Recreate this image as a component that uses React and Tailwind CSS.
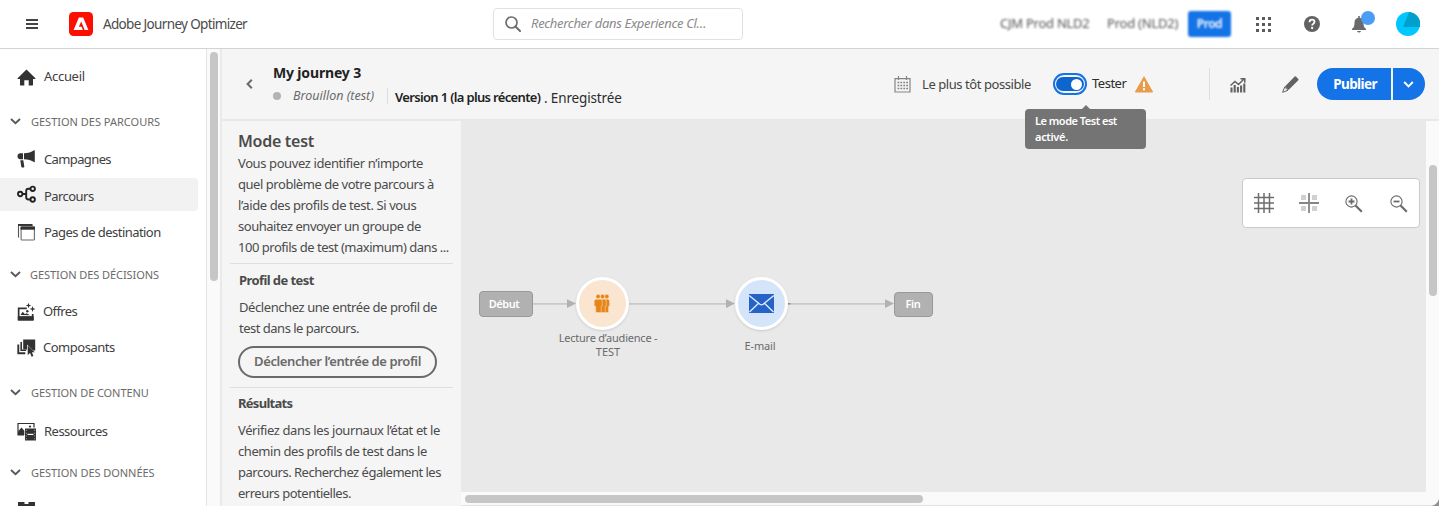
import React from "react";

function SectionTitle({ children, className = "" }) {
  return (
    <div className={`flex h-6 shrink-0 items-center pl-[10px] text-[11px] whitespace-nowrap text-[#6a6a6a] ${className}`}>
      <svg width="11" height="7" viewBox="0 0 11 7" className="mr-[10px] -mt-[2px] shrink-0">
        <path d="M1 1l4.500 4.300L10 1" fill="none" stroke="#5a5a5a" strokeWidth="1.900" />
      </svg>
      {children}
    </div>
  );
}

function NavItem({ icon, children, className = "" }) {
  return (
    <div className={`flex h-[34px] shrink-0 items-center pl-[17px] text-[13px] whitespace-nowrap text-[#404040] ${className}`}>
      <span className="mr-2 h-5 w-[19px] shrink-0">{icon}</span>
      {children}
    </div>
  );
}

const dark = "#323232";

const HomeIcon = (
  <svg width="19" height="20" viewBox="0 0 19 20">
    <path d="M9.500 2.500L.6 11.200c-.3.3-.1.8.3.8H3v6c0 .3.2.5.5.5H7.300v-5.200h4.400v5.200h3.800c.3 0 .5-.2.5-.5v-6h2.100c.4 0 .6-.5.3-.8z" fill={dark} />
  </svg>
);

const MegaphoneIcon = (
  <svg width="19" height="20" viewBox="0 0 19 20">
    <path d="M6 3.200H3.200A3 3 0 0 0 .5 6.200a3 3 0 0 0 2.700 3H6z" fill={dark} />
    <path d="M7 3.200C11 3.200 14.500 2.300 17 .3q.8-.4.8.4v11q0 .8-.8.4C14.500 10.200 11 9.200 7 9.200z" fill={dark} />
    <path d="M3.300 10.300h3l1 6.300c.1.500-.2.800-.6.800H5.100c-.5 0-.7-.3-.8-.7z" fill={dark} />
  </svg>
);

const JourneyIcon = (
  <svg width="19" height="20" viewBox="0 0 19 20" fill="none" stroke="#222" strokeWidth="1.900">
    <circle cx="3.200" cy="9" r="2.200" />
    <circle cx="15.700" cy="3.800" r="2.200" />
    <circle cx="15.700" cy="14.500" r="2.200" />
    <path d="M5.400 9H9M13.500 3.800H11.500Q9.200 3.800 9.200 6v6.300q0 2.200 2.300 2.200h2" />
  </svg>
);

const PagesIcon = (
  <svg width="19" height="20" viewBox="0 0 19 20">
    <path d="M1.500 14.500V2.400H15.500" fill="none" stroke="#555" strokeWidth="1.100" />
    <path d="M1 1h14.500v1.700H1z" fill={dark} />
    <rect x="4.100" y="4" width="13.300" height="13" rx=".8" fill="white" stroke="#6a6a6a" strokeWidth="1.100" />
    <path d="M3.600 3.500h14.300v3.200H3.600z" fill={dark} />
  </svg>
);

const OffersIcon = (
  <svg width="19" height="20" viewBox="0 0 19 20">
    <path d="M.8 5.500h9v1.700H2.500v7.300h12.300V12h1.700v5.800q0 .6-.6.6H1.400q-.6 0-.6-.6z" fill={dark} />
    <path d="M3.500 13l2.200-3.200L8 12.300l1.500-1 3.500 1.900z" fill={dark} />
    <circle cx="10.300" cy="9.200" r="1.200" fill={dark} />
    <path d="M11.500 .8l.7 2 2 .7-2 .7-.7 2-.7-2-2-.7 2-.7zM15.500 4l.8 2.300 2.300.7-2.300.8-.8 2.200-.7-2.200-2.300-.8 2.300-.7zM.800 14.300h16v4.200h-16z" fill={dark} />
  </svg>
);

const ComponentsIcon = (
  <svg width="19" height="20" viewBox="0 0 19 20">
    <path d="M1.300 6.500v8.800h7" fill="none" stroke={dark} strokeWidth="1.900" />
    <path d="M4.200 4v8.300h5" fill="none" stroke={dark} strokeWidth="1.600" />
    <path d="M6.200 1.500h12v11h-2L10 6.500v5H6.200z" fill={dark} />
    <path d="M10.700 7.500l7 6.800h-2.800l1.500 3.600-1.800.8-1.500-3.700-2.400 2z" fill={dark} />
  </svg>
);

const AssetsIcon = (
  <svg width="19" height="20" viewBox="0 0 19 20">
    <path d="M7 13H1V1.500h16v4" fill="none" stroke={dark} strokeWidth="1.200" />
    <path d="M1 13V9.500l3.500-4L7.300 8.800V13z" fill={dark} />
    <circle cx="13" cy="4.600" r="1.100" fill={dark} />
    <path d="M8 6.500h11v12H8z" fill={dark} />
    <path d="M10.500 12.400h6" stroke="white" strokeWidth="1.200" />
    <path d="M9.300 7.800v10M17.700 7.800v10" stroke="#aaa" strokeWidth=".9" strokeDasharray="1.200 1.600" />
  </svg>
);

const SchemaIcon = (
  <svg width="19" height="20" viewBox="0 0 19 20">
    <path d="M1 0h6.500v2h4V0H18v5.500h-2V12H3V5.500H1z" fill={dark} />
  </svg>
);

function Sidebar() {
  return (
    <nav className="flex h-full w-[207px] shrink-0 flex-col overflow-hidden border-r border-[#e4e4e4] bg-white pt-[11px]">
      <NavItem icon={HomeIcon}><span className="tracking-[-0.3px]">Accueil</span></NavItem>
      <SectionTitle className="mt-4">GESTION DES PARCOURS</SectionTitle>
      <NavItem icon={MegaphoneIcon} className="mt-[9px]"><span className="tracking-[-0.62px]">Campagnes</span></NavItem>
      <div className="mt-px mr-2 h-[33px] shrink-0 rounded-r bg-[#f2f2f2]">
        <NavItem icon={JourneyIcon} className="text-[#222222]"><span className="mt-[3px] tracking-[-0.55px]">Parcours</span></NavItem>
      </div>
      <NavItem icon={PagesIcon} className="mt-[5px]"><span className="tracking-[-0.55px]">Pages de destination</span></NavItem>
      <SectionTitle className="mt-[13px]"><span className="-ml-px tracking-[-0.07px]">GESTION DES DÉCISIONS</span></SectionTitle>
      <NavItem icon={OffersIcon} className="mt-2"><span className="-ml-px tracking-[-0.6px]">Offres</span></NavItem>
      <NavItem icon={ComponentsIcon} className="mt-[2px]"><span className="-ml-px tracking-[-0.48px]">Composants</span></NavItem>
      <SectionTitle className="mt-4"><span className="tracking-[-0.08px]">GESTION DE CONTENU</span></SectionTitle>
      <NavItem icon={AssetsIcon} className="mt-[10px]"><span className="tracking-[-0.52px]">Ressources</span></NavItem>
      <SectionTitle className="mt-3"><span className="tracking-[-0.05px]">GESTION DES DONNÉES</span></SectionTitle>
      <NavItem icon={SchemaIcon} className="mt-[10px]"><span className="tracking-[-0.4px]">Schémas</span></NavItem>
    </nav>
  );
}

function TopBar() {
  return (
    <header className="flex h-[49px] shrink-0 items-center border-b border-[#d3d3d3] bg-white">
      <div className="ml-[26px] flex h-[10px] w-3 flex-col justify-between">
        <div className="h-[2px] bg-[#444]" />
        <div className="h-[2px] bg-[#444]" />
        <div className="h-[2px] bg-[#444]" />
      </div>
      <svg width="24" height="24" viewBox="0 0 24 24" className="ml-[31px]">
        <rect width="24" height="24" rx="4.500" fill="#fa0f00" />
        <path d="M9.900 5.500h4.300L19.400 18h-3.700L12.200 9.400 9.900 14.700h2.700l1.300 3.300H4.600z" fill="white" />
      </svg>
      <div className="ml-[10px] w-[146px] text-[13.5px] tracking-[-0.66px] whitespace-nowrap text-[#4b4b4b]">Adobe Journey Optimizer</div>
      <div className="ml-[244px] flex h-8 w-[250px] items-center rounded border border-[#e1e1e1]">
        <svg width="16" height="16" viewBox="0 0 16 16" className="ml-[11px]">
          <circle cx="6.500" cy="6.500" r="5.500" fill="none" stroke="#6e6e6e" strokeWidth="1.700" />
          <path d="M10.500 10.500l4.500 4.500" stroke="#6e6e6e" strokeWidth="2" strokeLinecap="round" />
        </svg>
        <span className="ml-[10px] text-[13px] tracking-[-0.32px] whitespace-nowrap text-[#8a8a8a] italic">Rechercher dans Experience Cl…</span>
      </div>
      <div className="ml-[257px] flex items-center text-[13px] whitespace-nowrap text-[#555] blur-[1px]">
        <span className="w-[107px] tracking-[-0.25px]">CJM Prod NLD2</span>
        <span className="w-[81px] tracking-[-0.22px]">Prod (NLD2)</span>
        <span className="flex h-[26px] w-[43px] items-center justify-center rounded-[3px] bg-[#1473e6] text-[12px] font-semibold tracking-[-0.5px] text-white">Prod</span>
      </div>
      <svg width="15" height="15" viewBox="0 0 15 15" className="ml-[25px]" fill="#5c5c5c">
        <path d="M0 0h3v3H0zM6 0h3v3H6zM12 0h3v3h-3zM0 6h3v3H0zM6 6h3v3H6zM12 6h3v3h-3zM0 12h3v3H0zM6 12h3v3H6zM12 12h3v3h-3z" />
      </svg>
      <svg width="16" height="16" viewBox="0 0 16 16" className="ml-[33px]">
        <circle cx="8" cy="8" r="8" fill="#626262" />
        <path d="M5.500 6.200Q5.500 3.700 8 3.700t2.500 2.100Q10.500 7 9.300 7.800 8.100 8.500 8.100 9.600" fill="none" stroke="white" strokeWidth="1.800" />
        <circle cx="8.100" cy="12" r="1.150" fill="white" />
      </svg>
      <div className="relative ml-8 h-4 w-[14px]">
        <svg width="14" height="17" viewBox="0 0 14 17" fill="#6a6a6a">
          <path d="M6.200 0h1.600v1.800C10.500 2.300 11.500 4.200 11.500 6.700c0 3.600.8 5 2.500 6v1.300H0v-1.300c1.700-1 2.500-2.400 2.500-6 0-2.500 1-4.400 3.700-4.900zM5 15h4q-.5 1.600-2 1.600T5 15z" />
        </svg>
        <div className="absolute -top-[5px] left-[9px] h-[14px] w-[14px] rounded-full bg-[#4b9cf5]" />
      </div>
      <svg width="24" height="24" viewBox="0 0 24 24" className="ml-[30px]">
        <circle cx="12" cy="12" r="12" fill="#00c8ff" />
        <path d="M13 .1A12 12 0 0 1 24 15H7z" fill="#00a0cc" />
      </svg>
    </header>
  );
}

function JourneyHeader() {
  return (
    <div className="flex h-[72px] shrink-0 border-b-2 border-[#e8e8e8] bg-[#f5f5f5] whitespace-nowrap">
      <svg width="7" height="10" viewBox="0 0 7 10" className="mt-[30px] ml-6 shrink-0">
        <path d="M5.800 .8L1.600 5l4.200 4.200" fill="none" stroke="#6a6a6a" strokeWidth="2" />
      </svg>
      <div className="ml-[20px] w-[350px] pt-[14px]">
        <div className="h-5 text-[14px] leading-5 font-bold tracking-[-0.16px] text-[#222]">My journey 3</div>
        <div className="mt-[3px] flex h-5 items-center">
          <span className="h-2 w-2 rounded-full bg-[#b3b3b3]" />
          <span className="mt-px ml-3 w-[94px] text-[12.5px] text-[#6a6a6a] italic">Brouillon (test)</span>
          <span className="h-4 w-px bg-[#dedede]" />
          <span className="mt-[3px] ml-[7px] w-[149px] text-[13px] font-semibold tracking-[-0.66px] text-[#222]">Version 1 (la plus récente)</span>
          <span className="mt-[5px] text-[13.5px] tracking-[-0.15px] text-[#2c2c2c]">. Enregistrée</span>
        </div>
      </div>
      <div className="ml-auto flex h-[70px] items-center pr-[14px]">
        <svg width="17" height="17" viewBox="0 0 17 17">
          <path d="M1 2.700h15v13.300H1zM4.500 0v4M12.500 0v4" fill="none" stroke="#858585" strokeWidth="1.200" />
          <path d="M3.500 6.500h10.500M3.500 9.500h10.500M3.500 12.500h10.500" stroke="#858585" strokeWidth="1.700" strokeDasharray="1.800 1.100" />
        </svg>
        <span className="mt-px ml-[11px] w-[131px] text-[13px] tracking-[-0.43px] text-[#444]">Le plus tôt possible</span>
        <div className="relative flex h-[22px] w-[34px] items-center justify-center rounded-full border-2 border-[#1473e6]">
          <div className="flex h-[14px] w-7 items-center justify-end rounded-full bg-[#0d66d0] pr-[2px]">
            <div className="h-[11px] w-[11px] rounded-full bg-white" />
          </div>
          <div className="absolute top-[34px] -left-[30px] z-10 h-10 w-[121px] rounded bg-[#747474] pt-1 pl-[10px] text-[11px] leading-4 font-semibold text-white">
            <div className="tracking-[-0.5px]">Le mode Test est</div>
            <div className="tracking-[-0.3px]">activé.</div>
            <svg width="8" height="4" viewBox="0 0 8 4" className="absolute -top-1 left-[57px]">
              <path d="M0 4l4-4 4 4z" fill="#747474" />
            </svg>
          </div>
        </div>
        <span className="ml-[5px] w-[43px] text-[13px] tracking-[-0.5px] text-[#2c2c2c]">Tester</span>
        <svg width="18" height="17" viewBox="0 0 18 17">
          <path d="M9 .8L17.600 16H.4z" fill="#e99c48" stroke="#e99c48" strokeWidth="1" strokeLinejoin="round" />
          <path d="M9 5.500v5.500M9 12.300v2" stroke="white" strokeWidth="2" />
        </svg>
        <span className="ml-14 h-8 w-px bg-[#dedede]" />
        <svg width="16" height="16" viewBox="0 0 16 16" className="mt-[2px] ml-5">
          <path d="M.5 8.500L5 4.500l3.500 3L14 2M10.500 1.800h4.300v4" fill="none" stroke="#626262" strokeWidth="1.500" />
          <path d="M1.500 10.500v5M4.700 8v7.500M7.900 10v5.500M11.100 8.500v7M14.300 6.500v9" stroke="#626262" strokeWidth="2.100" />
        </svg>
        <svg width="17" height="17" viewBox="0 0 17 17" className="ml-9">
          <path d="M12.700.6q.6-.6 1.200 0l2.400 2.400q.6.600 0 1.200L6.500 14 2.900 10.400z" fill="#626262" />
          <path d="M2.700 11l3.300 3.300L.6 16.300z" fill="#f5f5f5" stroke="#626262" strokeWidth="1" strokeLinejoin="round" />
        </svg>
        <div className="ml-[18px] flex h-8 w-[74px] items-center justify-center rounded-l-full bg-[#1473e6] pl-[2px] text-[13.5px] font-bold tracking-[-0.6px] text-white">Publier</div>
        <div className="ml-[2px] flex h-8 w-8 items-center justify-center rounded-r-full bg-[#1473e6]">
          <svg width="11" height="7" viewBox="0 0 11 7" className="-ml-[2px]">
            <path d="M1.200 1l4.300 4.300L9.800 1" fill="none" stroke="white" strokeWidth="1.900" />
          </svg>
        </div>
      </div>
    </div>
  );
}

function TestPanel() {
  return (
    <aside className="h-full w-[239px] shrink-0 overflow-hidden bg-[#f5f5f5] px-4 pt-[9px] text-[13px] leading-[21px] whitespace-nowrap text-[#4b4b4b]">
      <h2 className="mb-px h-[22px] text-[16px] leading-[22px] font-semibold tracking-[-0.28px]">Mode test</h2>
      <div className="tracking-[-0.4px]">Vous pouvez identifier n’importe</div>
      <div className="tracking-[-0.46px]">quel problème de votre parcours à</div>
      <div className="tracking-[-0.4px]">l’aide des profils de test. Si vous</div>
      <div className="tracking-[-0.47px]">souhaitez envoyer un groupe de</div>
      <div className="tracking-[-0.48px]">100 profils de test (maximum) dans ...</div>
      <div className="-mx-2 mt-[5px] h-px bg-[#dedede]" />
      <h3 className="mt-[6px] ml-px font-bold tracking-[-0.58px]">Profil de test</h3>
      <div className="mt-[6px] ml-px tracking-[-0.42px]">Déclenchez une entrée de profil de</div>
      <div className="ml-px tracking-[-0.5px]">test dans le parcours.</div>
      <button className="mt-[7px] flex h-8 w-[199px] items-center justify-center rounded-full border-2 border-[#6a6a6a] pb-px font-semibold tracking-[-0.39px] text-[#6a6a6a]">Déclencher l’entrée de profil</button>
      <div className="-mx-2 mt-[9px] h-px bg-[#dedede]" />
      <h3 className="mt-[5px] font-bold tracking-[-0.72px]">Résultats</h3>
      <div className="mt-[6px] tracking-[-0.41px]">Vérifiez dans les journaux l’état et le</div>
      <div className="tracking-[-0.44px]">chemin des profils de test dans le</div>
      <div className="tracking-[-0.5px]">parcours. Recherchez également les</div>
      <div className="tracking-[-0.49px]">erreurs potentielles.</div>
    </aside>
  );
}

function Canvas() {
  return (
    <div className="relative flex-1 overflow-hidden bg-[#e9e9e9] text-[11px] whitespace-nowrap text-[#6a6a6a]">
      <svg width="500" height="20" viewBox="0 0 500 20" className="absolute top-[173px] left-0">
        <path d="M71 9.800h36M167 9.800h100M326 9.800h98" stroke="#c9c9c9" strokeWidth="1.800" />
        <path d="M106 5.300l9 4.300-9 4.300zM265 5.300l9 4.300-9 4.300zM424 5.300l9 4.300-9 4.300z" fill="#b1b1b1" />
        <path d="M327 9.800h2.500" stroke="#777" strokeWidth="1" />
      </svg>
      <div className="absolute top-[170px] left-[18px] flex h-[26px] w-[54px] items-center justify-center rounded border border-[#999] bg-[#b1b1b1] pr-1 font-semibold tracking-[-0.5px] text-white">Début</div>
      <div className="absolute top-[171px] left-[433px] flex h-[25px] w-[39px] items-center justify-center rounded border border-[#999] bg-[#b1b1b1] pr-px font-semibold tracking-[-0.4px] text-white">Fin</div>
      <div className="absolute top-[156px] left-[115px] flex h-[53px] w-[53px] items-center justify-center rounded-full border-[3px] border-white bg-[#fae6d0] pr-px shadow-sm">
        <svg width="16" height="19" viewBox="0 0 16 19">
          <g fill="#e68619" stroke="#fae6d0" strokeWidth=".5">
            <path d="M9.300 5.200h4.400q1.900 0 1.900 1.900v5.200h-1v6.300H9.600z" />
            <circle cx="12.800" cy="2.500" r="2.200" />
            <path d="M5.500 5.200h4.700q2 0 2 1.900v5.200h-1v6.300H6.100z" />
            <circle cx="8.500" cy="2.500" r="2.200" />
            <path d="M2 5.200h4.200q2 0 2 1.900v5.200H7.200v6.300H1.700v-6.300H.2V7.100q0-1.900 1.800-1.900z" />
            <circle cx="4.100" cy="2.500" r="2.200" />
          </g>
        </svg>
      </div>
      <div className="absolute top-[156px] left-[274px] flex h-[53px] w-[53px] items-center justify-center rounded-full border-[3px] border-white bg-[#d5e5f9] shadow-sm">
        <svg width="25" height="19" viewBox="0 0 25 19">
          <path d="M0 0h25v19H0z" fill="#2563c9" />
          <path d="M.2 1.500l10.700 8.800q1.600 1.200 3.200 0L24.800 1.500M.5 18l8.800-8.500M24.500 18l-8.800-8.500" fill="none" stroke="#e4eefb" strokeWidth="1.300" />
        </svg>
      </div>
      <div className="absolute top-[210px] left-[87px] w-[120px] text-center leading-[14px]">
        <div className="tracking-[-0.22px]">Lecture d’audience -</div>
        <div>TEST</div>
      </div>
      <div className="absolute top-[218px] left-[259px] w-20 text-center leading-[14px] tracking-[-0.15px]">E-mail</div>

      <div className="absolute top-[57px] right-[6px] flex h-[50px] w-[178px] items-center rounded border border-[#cacaca] bg-white pl-[11px]">
        <svg width="20" height="20" viewBox="0 0 20 20">
          <path d="M4.500 0v20M10 0v20M15.500 0v20M0 4.500h20M0 10h20M0 15.500h20" stroke="#6e6e6e" strokeWidth="1.500" />
        </svg>
        <svg width="20" height="20" viewBox="0 0 20 20" className="ml-[25px]">
          <path d="M2 2h5v5H2zM13 2h5v5h-5zM2 13h5v5H2zM13 13h5v5h-5z" fill="#d0d0d0" />
          <path d="M10 0v20M0 10h20" stroke="#858585" strokeWidth="1.800" />
        </svg>
        <svg width="18" height="18" viewBox="0 0 18 18" className="mt-px ml-[26px]" fill="none" stroke="#6a6a6a">
          <circle cx="6.500" cy="6.500" r="5.600" strokeWidth="1.100" />
          <path d="M3.500 6.500h6M6.500 3.500v6" strokeWidth="1.800" />
          <path d="M10.500 10.500l6.300 6.300" strokeWidth="2.200" />
        </svg>
        <svg width="18" height="18" viewBox="0 0 18 18" className="mt-px ml-[27px]" fill="none" stroke="#6a6a6a">
          <circle cx="6.500" cy="6.500" r="5.600" strokeWidth="1.100" />
          <path d="M3.500 6.500h6" strokeWidth="1.800" />
          <path d="M10.500 10.500l6.300 6.300" strokeWidth="2.200" />
        </svg>
      </div>
    </div>
  );
}

export default function App() {
  return (
    <div className="flex h-[506px] w-[1439px] flex-col overflow-hidden bg-white font-['Noto_Sans',sans-serif]">
      <TopBar />
      <div className="flex min-h-0 flex-1">
        <Sidebar />
        <div className="w-[13px] shrink-0 bg-[#fafafa] pt-[3px] pl-[3px]">
          <div className="h-[229px] w-2 rounded-full bg-[#c6c6c6]" />
        </div>
        <main className="flex min-w-0 flex-1 flex-col border-l-2 border-[#e9e9e9]">
          <JourneyHeader />
          <div className="flex min-h-0 flex-1">
            <TestPanel />
            <div className="flex min-w-0 flex-1 flex-col">
              <div className="flex min-h-0 flex-1">
                <Canvas />
                <div className="w-[13px] shrink-0 bg-[#fafafa] pt-11 pl-[3px]">
                  <div className="h-[131px] w-2 rounded-full bg-[#c6c6c6]" />
                </div>
              </div>
              <div className="relative h-[14px] shrink-0 border-b border-[#e4e4e4] bg-[#fafafa] pt-[3px] pl-1">
                <div className="h-2 w-[458px] rounded-full bg-[#c6c6c6]" />
                <svg width="8" height="7" viewBox="0 0 8 7" className="absolute right-0 -bottom-px">
                  <path d="M8 0v7H0Q6 6 8 0z" fill="#8f8f8f" />
                </svg>
              </div>
            </div>
          </div>
        </main>
      </div>
    </div>
  );
}
